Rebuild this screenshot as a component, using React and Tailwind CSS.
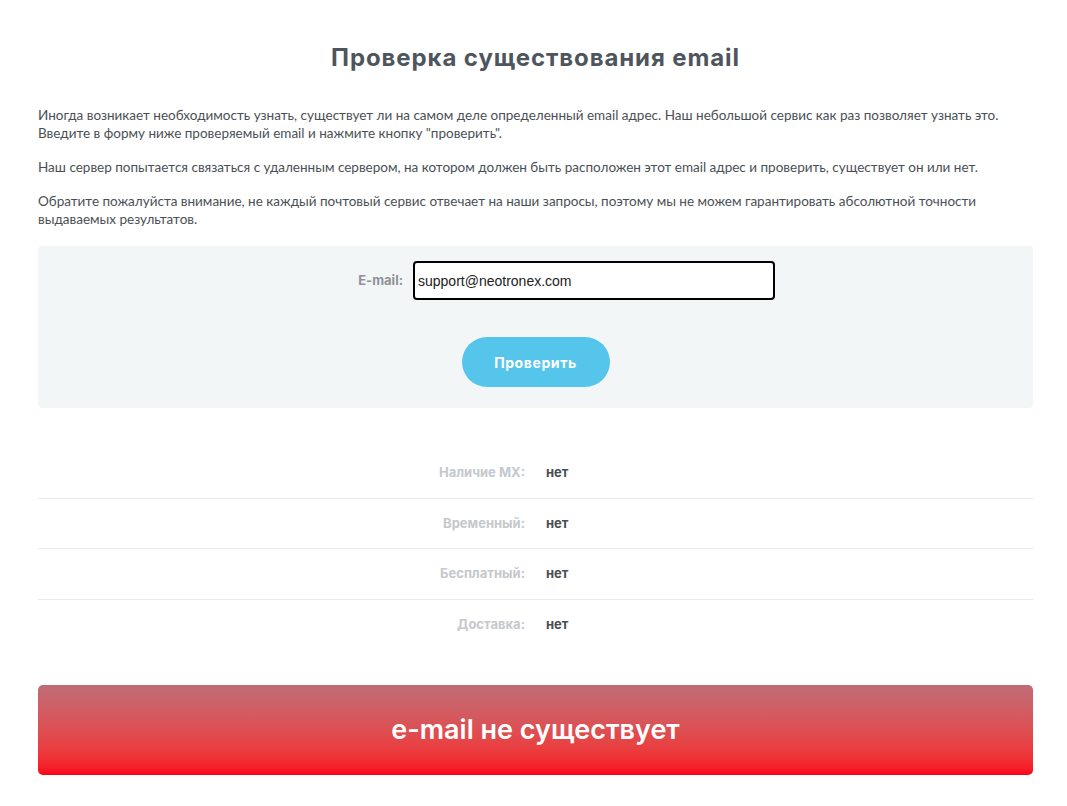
import { useState } from "react";

const rows = [
  { label: "Наличие MX:", value: "нет" },
  { label: "Временный:", value: "нет" },
  { label: "Бесплатный:", value: "нет" },
  { label: "Доставка:", value: "нет" },
];

export default function App() {
  const [email, setEmail] = useState("support@neotronex.com");

  return (
    <div className="min-h-screen bg-white font-['Lato','Open_Sans',sans-serif] text-[#4a4f55]">
      <div className="ml-[38px] w-[995px] pt-[42px] pb-8">
        <h1 className="text-center text-[24px] leading-8 font-bold text-[#4f555c] font-['Inter','Open_Sans',sans-serif] tracking-[0.9px]">
          Проверка существования email
        </h1>

        <div className="mt-[32px] text-[13.5px] leading-[18px] text-[#4a4f55] flex flex-col gap-[16px]">
          <p>
            Иногда возникает необходимость узнать, существует ли на самом деле
            определенный email адрес. Наш небольшой сервис как раз позволяет
            узнать это.
            <br />
            Введите в форму ниже проверяемый email и нажмите кнопку
            "проверить".
          </p>
          <p>
            Наш сервер попытается связаться с удаленным сервером, на котором
            должен быть расположен этот email адрес и проверить, существует он
            или нет.
          </p>
          <p>
            Обратите пожалуйста внимание, не каждый почтовый сервис отвечает на
            наши запросы, поэтому мы не можем гарантировать абсолютной точности
            выдаваемых результатов.
          </p>
        </div>

        <form
          className="mt-[18px] rounded bg-[#f3f6f7] pt-[15px] pb-[21px] flex flex-col items-center"
          onSubmit={(e) => e.preventDefault()}
        >
          <div className="flex items-center w-full">
            <label className="w-[375px] text-right pr-[10px] text-[13px] font-bold text-[#8e9196] font-['Inter',sans-serif]">
              E-mail:
            </label>
            <input
              className="w-[362px] h-[39px] rounded border-2 border-black bg-white px-[3px] text-[14px] text-[#222] font-['Liberation_Sans',sans-serif] outline-none"
              onChange={(e) => setEmail(e.target.value)}
              type="text"
              value={email}
            />
          </div>
          <button
            className="mt-[37px] w-[148px] h-[50px] rounded-full bg-[#56c5ec] text-white text-[14px] font-bold tracking-[0.6px] font-['Inter',sans-serif]"
            type="submit"
          >
            Проверить
          </button>
        </form>

        <div className="mt-[40px]">
          {rows.map((row, i) => (
            <div
              className={`flex items-center h-[50.5px] ${
                i < rows.length - 1 ? "border-b border-[#e8eaeb]" : ""
              }`}
              key={row.label}
            >
              <div className="w-[487px] text-right text-[13px] font-bold text-[#c5c8cc] font-['Inter',sans-serif]">
                {row.label}
              </div>
              <div className="pl-[21px] text-[13px] font-bold text-[#4a4f55] font-['Inter',sans-serif]">
                {row.value}
              </div>
            </div>
          ))}
        </div>

        <div className="mt-[35px] h-[90px] rounded-[5px] bg-gradient-to-b from-[#be6b77] to-[#fa0019] flex items-center justify-center">
          <span className="text-white text-[27px] font-semibold font-['Inter',sans-serif]">
            e-mail не существует
          </span>
        </div>
      </div>
    </div>
  );
}
